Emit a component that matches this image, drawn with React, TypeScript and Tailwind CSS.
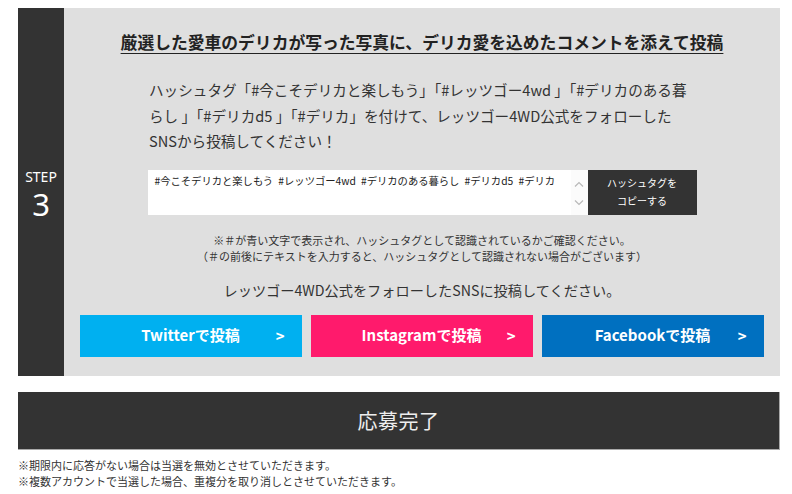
import React from "react";

const jp = { fontFamily: '"Noto Sans CJK JP", "Noto Sans", sans-serif' };

function Chevron({ up }: { up?: boolean }) {
  return (
    <svg width="10" height="6" viewBox="0 0 10 6" className="block">
      <path
        d={up ? "M1 5.5 L5 1.5 L9 5.5" : "M1 0.5 L5 4.5 L9 0.5"}
        fill="none"
        stroke="#b8b8b8"
        strokeWidth="1.2"
      />
    </svg>
  );
}

function SnsButton({ label, color }: { label: string; color: string }) {
  return (
    <div className={`relative flex h-[42px] w-[222px] items-center justify-center ${color}`}>
      <span className="text-[15px] font-bold text-white">{label}</span>
      <span className="absolute right-[17px] top-1/2 -translate-y-1/2 text-[15px] font-bold text-white">&gt;</span>
    </div>
  );
}

export default function App() {
  return (
    <div className="min-h-[494px] w-[792px] bg-white" style={jp}>
      <div className="ml-[18px] w-[762px] pt-2">
        <div className="flex h-[368px]">
          <div className="flex w-[46px] flex-col items-center justify-center bg-[#333333] pt-[4px] text-white">
            <div className="text-[14px] leading-[16px]" style={{ fontFamily: '"Noto Sans", sans-serif' }}>STEP</div>
            <div className="mt-[3px] text-[31px] leading-[32px]" style={{ fontFamily: '"Noto Sans", sans-serif' }}>3</div>
          </div>
          <div className="flex flex-1 flex-col items-center bg-[#dfdfdf] pt-[22px]">
            <h2 className="text-[16.8px] font-bold leading-[24px] text-[#222] underline decoration-1 underline-offset-[4px]">
              厳選した愛車のデリカが写った写真に、デリカ愛を込めたコメントを添えて投稿
            </h2>
            <p className="mt-[23px] w-[546px] whitespace-nowrap text-[14.6px] leading-[25.5px] text-[#333]">
              ハッシュタグ「#今こそデリカと楽しもう」「#レッツゴー4wd 」「#デリカのある暮
              <br />
              らし 」「#デリカd5 」「#デリカ」を付けて、レッツゴー4WD公式をフォローした
              <br />
              SNSから投稿してください！
            </p>
            <div className="mt-[16px] flex h-[45px] w-[549px]">
              <div className="flex flex-1 bg-white">
                <div className="flex-1 overflow-hidden whitespace-nowrap pl-[7px] pt-[4px] text-[10.3px] leading-[14px] text-[#222]">
                  #今こそデリカと楽しもう{"\u2002"}#レッツゴー4wd{"\u2002"}#デリカのある暮らし{"\u2002"}#デリカd5{"\u2002"}#デリカ
                </div>
                <div className="flex w-[17px] flex-col items-center justify-between bg-[#fbfbfb] pb-[9px] pt-[11px]">
                  <Chevron up />
                  <Chevron />
                </div>
              </div>
              <div className="flex w-[109px] flex-col items-center justify-center bg-[#333333] text-[10px] leading-[18px] text-white">
                <span>ハッシュタグを</span>
                <span>コピーする</span>
              </div>
            </div>
            <div className="mt-[17px] text-center text-[11px] leading-[16px] text-[#333]">
              <div>※＃が青い文字で表示され、ハッシュタグとして認識されているかご確認ください。</div>
              <div>（＃の前後にテキストを入力すると、ハッシュタグとして認識されない場合がございます）</div>
            </div>
            <div className="mt-[15px] text-[14.2px] leading-[22px] text-[#333]">
              レッツゴー4WD公式をフォローしたSNSに投稿してください。
            </div>
            <div className="mt-[14px] flex w-[685px] gap-[9px] pr-[1px]">
              <SnsButton label="Twitterで投稿" color="bg-[#00b0f0]" />
              <SnsButton label="Instagramで投稿" color="bg-[#ff1a6c]" />
              <SnsButton label="Facebookで投稿" color="bg-[#0070c0]" />
            </div>
          </div>
        </div>
        <div className="mt-[16px] flex h-[58px] items-center justify-center border-b border-r border-[#aaaaaa] bg-[#333333]">
          <span className="text-[20px] tracking-[0.5px] text-[#eeeeee]">応募完了</span>
        </div>
        <div className="mt-[7px] text-[11px] leading-[16px] text-[#333]">
          <div>※期限内に応答がない場合は当選を無効とさせていただきます。</div>
          <div>※複数アカウントで当選した場合、重複分を取り消しとさせていただきます。</div>
        </div>
      </div>
    </div>
  );
}
